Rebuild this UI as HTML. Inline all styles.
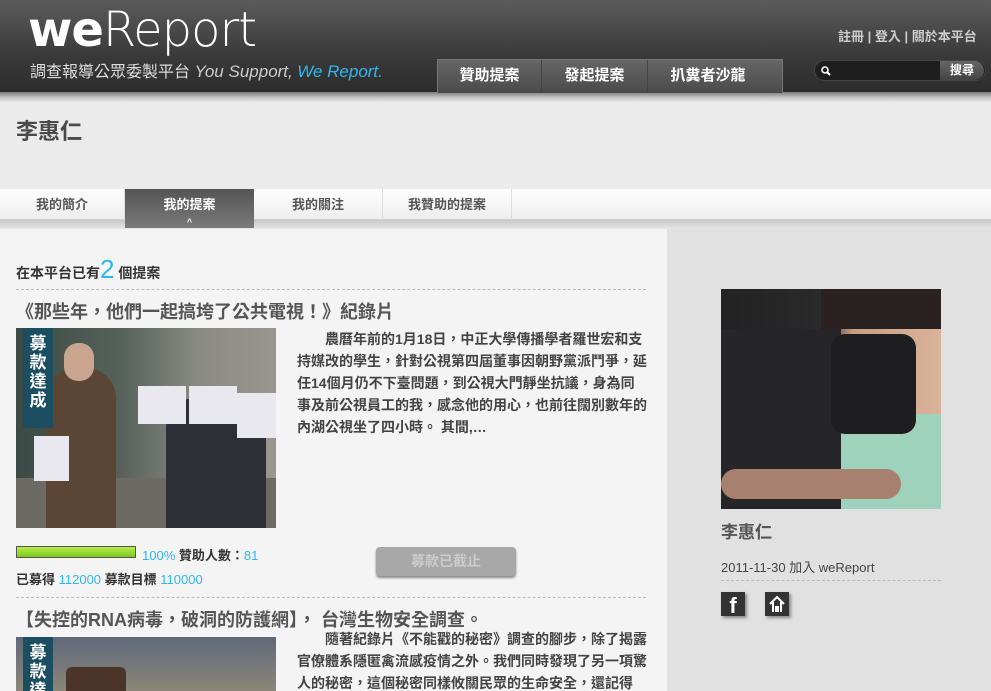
<!DOCTYPE html>
<html><head><meta charset="utf-8"><style>
*{margin:0;padding:0;box-sizing:border-box}
html,body{width:991px;height:691px;overflow:hidden}
body{position:relative;background:#ececec;font-family:"Liberation Sans","Noto Sans CJK TC",sans-serif;}
.abs{position:absolute}
#hdr{left:0;top:0;width:991px;height:92px;background:linear-gradient(#5b5b5b,#3a3a3a 60%,#2c2c2c);}
#strip{left:0;top:92px;width:991px;height:10px;background:linear-gradient(#7a7a7a,#bdbdbd,#e8e8e8);}
.logo{left:28px;top:2px;font-size:48px;color:#fff;font-family:"DejaVu Sans","Liberation Sans",sans-serif;letter-spacing:-1px;line-height:56px}
.logo b{font-weight:bold}
.logo span{font-weight:200;font-family:"DejaVu Sans ExtraLight","DejaVu Sans",sans-serif}
.sub{left:30px;top:58px;font-size:16px;color:#ddd;white-space:nowrap}
.sub i{font-size:17px;color:#ccc}
.sub i.b{color:#2fb8f0}
.toplinks{left:838px;top:26px;font-size:13px;color:#ccc;font-weight:bold;white-space:nowrap}
.nav{left:437px;top:59px;width:346px;height:34px;background:linear-gradient(#666,#4a4a4a);border:1px solid #777;border-bottom:none;display:flex}
.nav div{color:#fff;font-weight:bold;font-size:15px;text-align:center;line-height:32px;border-right:1px solid #444}
.search{left:814px;top:60px;width:172px;height:21px;border-radius:11px;background:#1e1e1e;border:1px solid #444}
.sbtn{left:940px;top:61px;width:44px;height:19px;background:linear-gradient(#666,#444);border-radius:0 10px 10px 0;color:#fff;font-size:12px;font-weight:bold;text-align:center;line-height:19px}
#band{left:0;top:102px;width:991px;height:88px;background:#ebebeb}
.name{left:16px;top:114px;font-size:22px;font-weight:bold;color:#4a4a4a}
#tabs{left:0;top:189px;width:991px;height:31px;background:linear-gradient(#fff,#ededed);border-bottom:1px solid #cfcfcf}
#tabshade{left:0;top:220px;width:991px;height:9px;background:linear-gradient(#c8c8c8,#e6e6e6)}
.tab{top:189px;height:31px;line-height:31px;text-align:center;font-size:13px;font-weight:bold;color:#555;border-right:1px solid #ddd}
.tab.on{background:linear-gradient(#555,#7a7a7a);color:#fff;height:39px;border:none}
#left{left:0;top:229px;width:667px;height:462px;background:#f4f4f4}
#right{left:667px;top:229px;width:324px;height:462px;background:#e1e1e1}
.cnt{left:16px;top:254px;font-size:14px;font-weight:bold;color:#333}
.cnt em{font-style:normal;color:#2fb8f0;font-size:26px;font-weight:normal}
.dash{height:0;border-top:1px dashed #bbb}
.t{font-size:18px;color:#555;font-weight:bold;white-space:nowrap}
.p{font-size:14px;color:#444;line-height:22px;text-indent:2em;font-weight:bold;overflow:hidden}
.small{font-size:13px;font-weight:bold;color:#333;white-space:nowrap}
.small span{color:#2fb8f0;font-weight:normal}
</style></head><body>
<div id="hdr" class="abs"></div>
<div id="strip" class="abs"></div>
<div class="abs logo"><b>we</b><span>Report</span></div>
<div class="abs sub">調查報導公眾委製平台 <i>You Support,</i> <i class="b">We Report.</i></div>
<div class="abs toplinks">註冊 | 登入 | 關於本平台</div>
<div class="abs nav"><div style="width:104px">贊助提案</div><div style="width:106px">發起提案</div><div style="width:120px;border:none">扒糞者沙龍</div></div>
<div class="abs search"></div>
<svg class="abs" style="left:820px;top:65px" width="12" height="12"><circle cx="5" cy="5" r="3" stroke="#fff" stroke-width="1.6" fill="none"/><line x1="7" y1="7" x2="10" y2="10" stroke="#fff" stroke-width="2"/></svg>
<div class="abs sbtn">搜尋</div>
<div id="band" class="abs"></div>
<div class="abs name">李惠仁</div>
<div id="tabs" class="abs"></div>
<div id="tabshade" class="abs"></div>
<div class="abs tab" style="left:0;width:125px">我的簡介</div>
<div class="abs tab on" style="left:125px;width:129px">我的提案<div style="font-size:9px;line-height:8px;margin-top:-2px">^</div></div>
<div class="abs tab" style="left:254px;width:129px">我的關注</div>
<div class="abs tab" style="left:383px;width:129px">我贊助的提案</div>
<div id="left" class="abs"></div>
<div id="right" class="abs"></div>
<div class="abs cnt">在本平台已有<em>2</em> 個提案</div>
<div class="abs dash" style="left:16px;top:289px;width:630px"></div>
<div class="abs t" style="left:16px;top:298px">《那些年，他們一起搞垮了公共電視！》紀錄片</div>
<div class="abs" style="left:16px;top:328px;width:260px;height:200px;background:linear-gradient(90deg,#3a4a44,#56615a 40%,#8a8a84 70%,#9a9690);overflow:hidden">
 <div class="abs" style="left:0;top:150px;width:260px;height:50px;background:#6c6a62"></div>
 <div class="abs" style="left:30px;top:40px;width:70px;height:160px;background:#5b4535;border-radius:30px 30px 0 0"></div>
 <div class="abs" style="left:48px;top:15px;width:30px;height:38px;background:#c9a590;border-radius:14px"></div>
 <div class="abs" style="left:150px;top:70px;width:100px;height:130px;background:#2d2e36;border-radius:30px 30px 0 0"></div>
 <div class="abs" style="left:122px;top:58px;width:48px;height:38px;background:#e8e8ee"></div>
 <div class="abs" style="left:173px;top:58px;width:48px;height:38px;background:#e8e8ee"></div>
 <div class="abs" style="left:221px;top:65px;width:40px;height:45px;background:#e8e8ee"></div>
 <div class="abs" style="left:18px;top:108px;width:35px;height:45px;background:#e8e8ee"></div>
 <div class="abs" style="left:7px;top:0;width:30px;height:100px;background:#1c4e62;color:#fff;font-weight:bold;font-size:17px;line-height:19px;text-align:center;padding-top:6px">募<br>款<br>達<br>成</div>
</div>
<div class="abs p" style="left:297px;top:328px;width:350px">農曆年前的1月18日，中正大學傳播學者羅世宏和支持媒改的學生，針對公視第四屆董事因朝野黨派鬥爭，延任14個月仍不下臺問題，到公視大門靜坐抗議，身為同事及前公視員工的我，感念他的用心，也前往闊別數年的內湖公視坐了四小時。 其間,…</div>
<div class="abs" style="left:16px;top:546px;width:120px;height:12px;background:linear-gradient(#b5ec4a,#7cc81c);border:1px solid #555"></div>
<div class="abs small" style="left:142px;top:545px"><span>100%</span> 贊助人數：<span>81</span></div>
<div class="abs small" style="left:16px;top:569px">已募得 <span>112000</span> 募款目標 <span>110000</span></div>
<div class="abs" style="left:376px;top:547px;width:140px;height:29px;background:#a8a8a8;border-radius:4px;box-shadow:0 2px 2px #888;color:#ccc;font-weight:bold;font-size:14px;text-align:center;line-height:29px">募款已截止</div>
<div class="abs dash" style="left:16px;top:597px;width:630px"></div>
<div class="abs t" style="left:16px;top:606px">【失控的RNA病毒，破洞的防護網】， 台灣生物安全調查。</div>
<div class="abs" style="left:16px;top:637px;width:260px;height:54px;background:linear-gradient(#60687a,#8a8678);overflow:hidden">
 <div class="abs" style="left:7px;top:0;width:30px;height:60px;background:#1c4e62;color:#fff;font-weight:bold;font-size:17px;line-height:19px;text-align:center;padding-top:6px">募<br>款<br>達</div>
 <div class="abs" style="left:50px;top:30px;width:60px;height:30px;background:#4a3528;border-radius:6px"></div>
</div>
<div class="abs p" style="left:297px;top:628px;width:350px;height:63px">隨著紀錄片《不能戳的秘密》調查的腳步，除了揭露官僚體系隱匿禽流感疫情之外。我們同時發現了另一項驚人的秘密，這個秘密同樣攸關民眾的生命安全，還記得</div>
<div class="abs" style="left:721px;top:289px;width:220px;height:220px;background:linear-gradient(90deg,#222 0,#2a2a2a 45%,#c99e84 60%,#d9b49a);overflow:hidden">
 <div class="abs" style="left:100px;top:0;width:120px;height:40px;background:#2a2220"></div>
 <div class="abs" style="left:100px;top:125px;width:120px;height:95px;background:#9fd2bd;border-radius:20px 0 0 0"></div>
 <div class="abs" style="left:0;top:40px;width:120px;height:180px;background:#262628"></div>
 <div class="abs" style="left:110px;top:45px;width:85px;height:100px;background:#1e1e20;border-radius:14px"></div>
 <div class="abs" style="left:0;top:180px;width:180px;height:30px;background:#a88070;border-radius:15px"></div>
</div>
<div class="abs" style="left:721px;top:518px;font-size:17px;font-weight:bold;color:#555">李惠仁</div>
<div class="abs" style="left:721px;top:557px;font-size:13px;color:#444">2011-11-30 加入 weReport</div>
<div class="abs dash" style="left:721px;top:580px;width:220px"></div>
<div class="abs" style="left:721px;top:592px;width:24px;height:24px;background:#333;box-shadow:2px 2px 3px #888;color:#fff;font-weight:bold;font-size:22px;text-align:center;line-height:28px;overflow:hidden">f</div>
<div class="abs" style="left:765px;top:592px;width:24px;height:24px;background:#333;box-shadow:2px 2px 3px #888"><svg width="24" height="24"><path d="M5 12 L12 5 L19 12 M8 10 V20 M16 10 V20 M11 20 V15 H13 V20" stroke="#fff" stroke-width="2" fill="none"/></svg></div>
</body></html>
